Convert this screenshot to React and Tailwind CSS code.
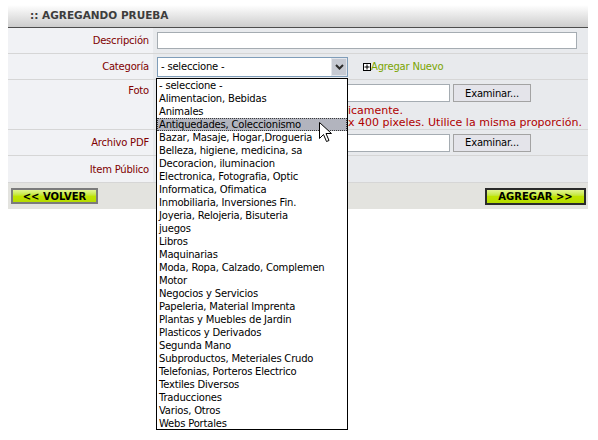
import React from 'react';

const categorias = [
  '- seleccione -',
  'Alimentacion, Bebidas',
  'Animales',
  'Antiquedades, Coleccionismo',
  'Bazar, Masaje, Hogar,Drogueria',
  'Belleza, higiene, medicina, sa',
  'Decoracion, iluminacion',
  'Electronica, Fotografia, Optic',
  'Informatica, Ofimatica',
  'Inmobiliaria, Inversiones Fin.',
  'Joyeria, Relojeria, Bisuteria',
  'juegos',
  'Libros',
  'Maquinarias',
  'Moda, Ropa, Calzado, Complemen',
  'Motor',
  'Negocios y Servicios',
  'Papeleria, Material Imprenta',
  'Plantas y Muebles de Jardin',
  'Plasticos y Derivados',
  'Segunda Mano',
  'Subproductos, Meteriales Crudo',
  'Telefonias, Porteros Electrico',
  'Textiles Diversos',
  'Traducciones',
  'Varios, Otros',
  'Webs Portales',
];

const tahoma = "font-['DejaVu_Sans',sans-serif] text-[10px] tracking-[-0.2px]";

const Label = ({ children, top }) => (
  <div className={`w-[145px] shrink-0 bg-[#f1f2f5] pr-[4px] text-right text-[#800000] ${tahoma} flex justify-end ${top ? 'items-start pt-[3px]' : 'items-center'}`}>
    {children}
  </div>
);

const Examinar = () => (
  <div className={`w-[78px] h-[18px] ml-[3px] bg-[#e4e4ea] border border-[#a3a3a3] flex items-center justify-center text-black ${tahoma}`}>
    Examinar...
  </div>
);

const LimeButton = ({ children, dark, className }) => (
  <div className={`h-[16px] border-2 ${dark ? 'border-[#2a2a2a]' : 'border-[#7b7b7b]'} bg-gradient-to-b from-[#e2f58f] via-[#bfe400] to-[#b6dc00] flex items-center justify-center font-['DejaVu_Sans',sans-serif] font-bold text-[10px] text-black ${className}`}>
    {children}
  </div>
);

export default function App() {
  return (
    <div className="relative w-[598px] h-[440px] bg-white overflow-hidden">
      <div className="ml-[8px] mt-[5px] w-[580px]">
        <div className="h-[23px] bg-gradient-to-b from-white to-[#cdcdcd] border-b border-[#4d4d4d] flex items-center pl-[22px] font-['DejaVu_Sans',sans-serif] font-bold text-[10.5px] text-[#3d3d3d]">
          :: AGREGANDO PRUEBA
        </div>

        <div className="flex h-[26px] border-b border-[#d6d6d6]">
          <Label>Descripción</Label>
          <div className="flex-1 bg-[#e8eaed] flex items-center pl-[4px]">
            <div className="w-[420px] h-[17px] bg-white border border-[#a5acb2]" />
          </div>
        </div>

        <div className="flex h-[26px] border-b border-[#d6d6d6]">
          <Label>Categoría</Label>
          <div className="flex-1 bg-[#e8eaed] flex items-center pl-[4px]">
            <div className="w-[191px] h-[20px] bg-white border border-[#7f9db9] flex items-center">
              <span className={`flex-1 pl-[3px] text-black ${tahoma}`}>- seleccione -</span>
              <div className="w-[16px] h-[18px] bg-[#c6cad3] border border-[#e3e6ec] flex items-center justify-center">
                <svg width="9" height="6" viewBox="0 0 9 6">
                  <path d="M1 1 L4.5 4.5 L8 1" stroke="#2b2b2b" strokeWidth="2" fill="none" />
                </svg>
              </div>
            </div>
            <div className="ml-[15px] flex items-center">
              <div className="w-[8px] h-[8px] border border-black bg-white flex items-center justify-center">
                <svg width="6" height="6" viewBox="0 0 6 6">
                  <path d="M3 0.5 V5.5 M0.5 3 H5.5" stroke="black" strokeWidth="1" />
                </svg>
              </div>
              <span className={`text-[#7aa400] ${tahoma}`}>Agregar Nuevo</span>
            </div>
          </div>
        </div>

        <div className="flex h-[50px] border-b border-[#d6d6d6]">
          <Label top>Foto</Label>
          <div className="flex-1 bg-[#e8eaed] pl-[4px] pt-[4px]">
            <div className="flex items-center">
              <div className="w-[293px] h-[18px] bg-white border border-[#a5acb2]" />
              <Examinar />
            </div>
            <div className="mt-[3px] font-['DejaVu_Sans',sans-serif] text-[11px] leading-[12px] text-[#b00000] whitespace-nowrap">
              <div><span className="inline-block w-[191px]" />icamente.</div>
              <div><span className="inline-block w-[191px]" />x 400 pixeles. Utilice la misma proporción.</div>
            </div>
          </div>
        </div>

        <div className="flex h-[26px] border-b border-[#d6d6d6]">
          <Label>Archivo PDF</Label>
          <div className="flex-1 bg-[#e8eaed] flex items-center pl-[4px]">
            <div className="w-[293px] h-[18px] bg-white border border-[#a5acb2]" />
            <Examinar />
          </div>
        </div>

        <div className="flex h-[27px] border-b border-[#d6d6d6]">
          <Label>Item Público</Label>
          <div className="flex-1 bg-[#e8eaed]" />
        </div>

        <div className="h-[26px] bg-[#e3e3df] flex items-center justify-between pl-[3px] pr-[2px]">
          <LimeButton className="w-[87px]">&lt;&lt; VOLVER</LimeButton>
          <LimeButton dark className="w-[101px] h-[17px]">AGREGAR &gt;&gt;</LimeButton>
        </div>
      </div>

      <div className="absolute left-[156px] top-[78px] w-[192px] h-[352px] bg-white border border-black">
        {categorias.map((c, i) => (
          <div
            key={c}
            className={`h-[13px] leading-[13px] pl-[2px] whitespace-nowrap text-black ${tahoma} ${i === 3 ? 'bg-[#b2b4be] outline-1 outline-dotted -outline-offset-1 outline-[#3a3a3a]' : ''}`}
          >
            {c}
          </div>
        ))}
      </div>

      <svg className="absolute left-[319px] top-[122px]" width="14" height="22" viewBox="0 0 14 22">
        <path d="M0.5 0.5 L0.5 16.5 L4.5 12.5 L7.5 19.5 L10 18.5 L7 11.5 L12.5 11.5 Z" fill="white" stroke="black" strokeWidth="1" />
      </svg>
    </div>
  );
}
